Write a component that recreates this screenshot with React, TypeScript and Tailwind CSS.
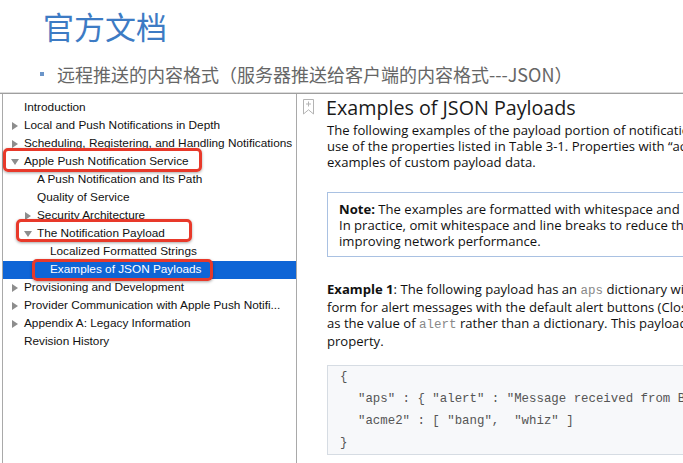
import { FC } from "react";

type Row = {
  label: string;
  level: 0 | 1 | 2;
  arrow?: "right" | "down";
  selected?: boolean;
  mark?: string;
};

const rows: Row[] = [
  { label: "Introduction", level: 0 },
  { label: "Local and Push Notifications in Depth", level: 0, arrow: "right" },
  { label: "Scheduling, Registering, and Handling Notifications", level: 0, arrow: "right" },
  {
    label: "Apple Push Notification Service",
    level: 0,
    arrow: "down",
    mark: "left-0 top-[-5px] w-[199px] h-[24px]",
  },
  { label: "A Push Notification and Its Path", level: 1 },
  { label: "Quality of Service", level: 1 },
  { label: "Security Architecture", level: 1, arrow: "right" },
  {
    label: "The Notification Payload",
    level: 1,
    arrow: "down",
    mark: "left-[13px] top-[-6px] w-[176px] h-[23px]",
  },
  { label: "Localized Formatted Strings", level: 2 },
  {
    label: "Examples of JSON Payloads",
    level: 2,
    selected: true,
    mark: "left-[29px] top-[-2px] w-[181px] h-[22px]",
  },
  { label: "Provisioning and Development", level: 0, arrow: "right" },
  { label: "Provider Communication with Apple Push Notifi...", level: 0, arrow: "right" },
  { label: "Appendix A: Legacy Information", level: 0, arrow: "right" },
  { label: "Revision History", level: 0 },
];

const indent = { 0: "pl-[8px]", 1: "pl-[21px]", 2: "pl-[34px]" };

const Arrow: FC<{ dir?: "right" | "down" }> = ({ dir }) => (
  <span className="w-[13px] flex items-center shrink-0">
    {dir === "right" && (
      <svg width="6" height="8" viewBox="0 0 6 8" className="ml-[1px]">
        <path d="M0 0 L6 4 L0 8 Z" fill="#8d8d8d" />
      </svg>
    )}
    {dir === "down" && (
      <svg width="8" height="6" viewBox="0 0 8 6">
        <path d="M0 0 L8 0 L4 6 Z" fill="#8d8d8d" />
      </svg>
    )}
  </span>
);

const Sidebar: FC = () => (
  <div className="w-[295px] ml-[2px] shrink-0 border-l border-r border-[#a9a9a9] pt-[5px] font-['Liberation_Sans',Arial,sans-serif] text-[11.8px]">
    {rows.map((r) => (
      <div
        key={r.label}
        className={`relative h-[18px] flex items-center whitespace-nowrap ${indent[r.level]} ${
          r.selected ? "bg-[#0f65d6] text-white" : "text-[#111]"
        }`}
      >
        <Arrow dir={r.arrow} />
        <span>{r.label}</span>
        {r.mark && (
          <span
            className={`absolute ${r.mark} border-[3px] border-[#e8392a] rounded-[5px] shadow-[0_1px_3px_rgba(0,0,0,0.35)]`}
          />
        )}
      </div>
    ))}
  </div>
);

const Code: FC<{ children: string }> = ({ children }) => (
  <span className="font-['Liberation_Mono',monospace] text-[12.5px] text-[#888]">{children}</span>
);

const Content: FC = () => (
  <div className="flex-1 overflow-hidden pt-[2px] font-['Open_Sans',sans-serif] text-[13.1px] leading-[16px] text-[#111]">
    <div className="flex items-start whitespace-nowrap">
      <svg width="11" height="16" viewBox="0 0 11 16" className="ml-[6px] mt-[3px] shrink-0">
        <path d="M0.5 0.5 H10.5 V15 L5.5 10.8 L0.5 15 Z" fill="none" stroke="#b3b3b3" />
        <path d="M5.5 2.5 V7.5 M3 5 H8" stroke="#b3b3b3" />
      </svg>
      <h1 className="ml-[12px] text-[19.7px] leading-[24px] text-[#1a1a1a]">
        Examples of JSON Payloads
      </h1>
    </div>

    <div className="pl-[30px] mt-[2px] whitespace-nowrap">
      <p>The following examples of the payload portion of notifications illustrate the practical</p>
      <p>use of the properties listed in Table 3-1. Properties with “acme” in the key name are</p>
      <p>examples of custom payload data.</p>

      <div className="mt-[22px] w-[560px] border border-[#a9c1e2] pl-[11px] pt-[8px] pb-[7px]">
        <p>
          <b>Note:</b> The examples are formatted with whitespace and line breaks for readability.
        </p>
        <p>In practice, omit whitespace and line breaks to reduce the size of the payload,</p>
        <p>improving network performance.</p>
      </div>

      <div className="mt-[24px]">
        <p>
          <b>Example 1</b>: The following payload has an <Code>aps</Code> dictionary with a simple,
          recommended
        </p>
        <p>form for alert messages with the default alert buttons (Close and View). It uses a string</p>
        <p>
          as the value of <Code>alert</Code> rather than a dictionary. This payload also has a custom
          array
        </p>
        <p>property.</p>
      </div>

      <div className="mt-[16px] w-[560px] bg-[#f7f8fa] border border-[#d6dce3] pl-[12px] font-['Liberation_Mono',monospace] text-[12.4px] leading-[22px] text-[#555] whitespace-pre">
        <p>{"{"}</p>
        <p className="pl-[18px]">{'"aps" : { "alert" : "Message received from Bob" },'}</p>
        <p className="pl-[18px]">{'"acme2" : [ "bang",  "whiz" ]'}</p>
        <p>{"}"}</p>
      </div>
    </div>
  </div>
);

export default function App() {
  return (
    <div className="w-[683px] h-[463px] overflow-hidden bg-white flex flex-col">
      <div className="h-[92px] shrink-0 relative">
        <div className="pl-[43px] pt-[8px] font-['Noto_Sans_CJK_SC',sans-serif] text-[31px] leading-[36px] text-[#3d7bc4]">
          官方文档
        </div>
        <div className="flex items-center mt-[19px] pl-[40px] whitespace-nowrap">
          <span className="w-[4px] h-[4px] bg-[#6b95c9] shrink-0" />
          <span className="ml-[13px] font-['Noto_Sans_CJK_SC',sans-serif] text-[18px] leading-[22px] text-[#666]">
            远程推送的内容格式（服务器推送给客户端的内容格式---JSON）
          </span>
        </div>
      </div>
      <div className="h-[1px] bg-[#dcdcdc] shrink-0" />
      <div className="h-[1px] bg-[#9f9f9f] shrink-0" />
      <div className="flex flex-1 min-h-0">
        <Sidebar />
        <Content />
      </div>
    </div>
  );
}
